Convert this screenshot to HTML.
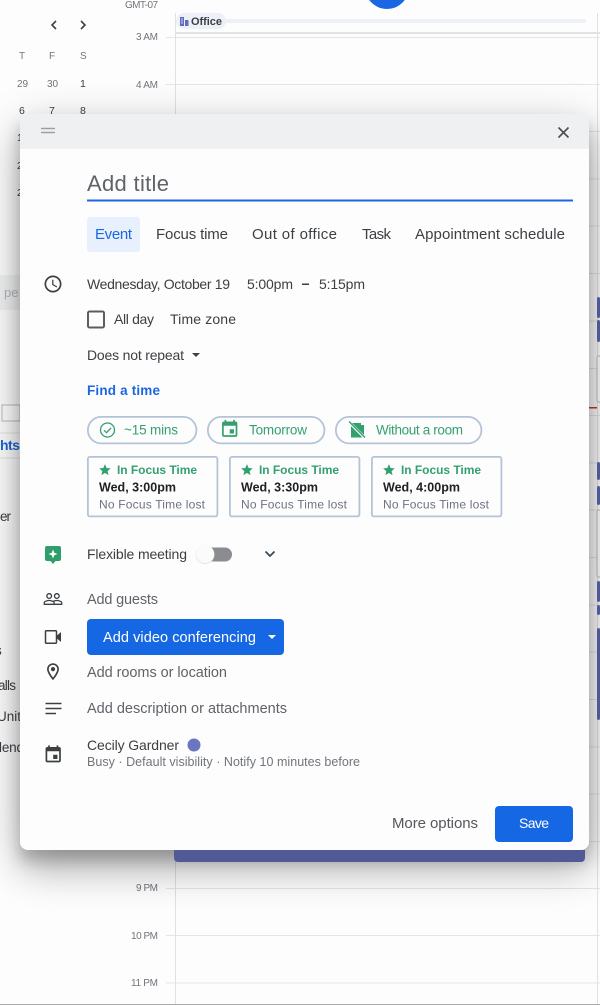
<!DOCTYPE html>
<html><head><meta charset="utf-8">
<style>
html,body{margin:0;padding:0;width:600px;height:1005px;overflow:hidden;background:#fefdfe}
svg{position:absolute;left:0;top:0}
text{font-family:"Liberation Sans",sans-serif;font-size:14.5px;fill:#3c4043}
.g{fill:#70757a;font-size:10px}
.m{fill:#5f6368}
.c{font-size:14px}
.gr{fill:#34a06f;font-size:13.5px}
.st{fill:#34a06f;font-size:12px;font-weight:bold}
.wd{fill:#202124;font-size:12.5px;font-weight:bold}
.nf{fill:#6b7280;font-size:12px}
#d{position:absolute;left:20px;top:114px;width:569px;height:736px;background:#fefdfe;border-radius:8px;box-shadow:0 24px 38px rgba(0,0,0,.17),0 9px 46px rgba(0,0,0,.2),0 11px 15px rgba(0,0,0,.2)}
</style></head><body>
<svg width="600" height="1005" viewBox="0 0 600 1005">
<rect width="600" height="1005" fill="#fefdfe"/>
<circle cx="387" cy="-13" r="22" fill="#1a67e3"/>
<text class="g" x="125" y="8" textLength="33">GMT-07</text>
<path d="M56 21l-4 4 4 4M81 21l4 4-4 4" fill="none" stroke="#3c4043" stroke-width="1.600"/>
<text class="g" x="19" y="59" textLength="6">T</text><text class="g" x="49" y="59" textLength="6">F</text><text class="g" x="80" y="59" textLength="6">S</text>
<text class="g" x="17" y="87" textLength="11">29</text><text class="g" x="47" y="87" textLength="11">30</text>
<text x="80" y="87" style="font-size:10.5px">1</text>
<text x="19" y="114" style="font-size:10.5px">6</text><text x="49" y="114" style="font-size:10.5px">7</text><text x="80" y="114" style="font-size:10.5px">8</text>
<text x="17" y="141" style="font-size:10.5px">1</text><text x="17" y="169" style="font-size:10.5px">2</text><text x="17" y="196" style="font-size:10.5px">2</text>
<rect x="0" y="275" width="20" height="35" fill="#f1f3f4"/>
<text x="4" y="297" style="fill:#b5b8bb;font-size:13px">pe</text>
<rect x="2" y="405" width="18" height="16" fill="#fff" stroke="#b8bbbe"/>
<path d="M0 433h20M0 458h20" stroke="#e3e4e6"/>
<text x="0" y="450" style="fill:#1a67d8;font-size:14px;font-weight:bold" textLength="20">hts</text>
<text x="0" y="521" style="font-size:13.5px" textLength="11">er</text>
<text x="-5" y="655" style="font-size:13.5px">s</text>
<text x="-2" y="690" style="font-size:13.5px" textLength="18">alls</text>
<text x="-3" y="721" style="font-size:13.5px" textLength="24">Unit</text>
<text x="-1" y="752" style="font-size:13.5px" textLength="25">lend</text>

<text class="g" x="136" y="40" textLength="22">3 AM</text>
<text class="g" x="136" y="88" textLength="22">4 AM</text>
<text class="g" x="136" y="891" textLength="22">9 PM</text>
<text class="g" x="131" y="939" textLength="27">10 PM</text>
<text class="g" x="131" y="986" textLength="27">11 PM</text>
<path d="M175 33h425" stroke="#d8d9da" stroke-width="1.400"/>
<path d="M166 37.500h434M166 84.500h434M166 131.500h434M166 179h434M166 226h434M166 273.500h434M166 321h434M166 368.500h434M166 415.500h434M166 463h434M166 510h434M166 557.500h434M166 605h434M166 652h434M166 699.500h434M166 747h434M166 794h434M166 841.500h434M166 888.500h434M166 935.500h434M166 983h434" stroke="#e4e5e7"/>
<path d="M175.500 13v992M597.500 13v992" stroke="#e0e1e3"/>
<path d="M0 1004.500h600" stroke="#a9aaac"/>
<rect x="176" y="13" width="50" height="16" rx="8" fill="#eef0f7"/>
<rect x="220" y="19" width="366" height="4" rx="2" fill="#eef0f7"/>
<path d="M180 17h4v9h-4zM185 20h3.500v6h-3.500z" fill="#5c6bc0"/>
<path d="M181 19h2M181 21h2M181 23h2" stroke="#eef0f7" stroke-width=".8"/>
<text x="191" y="25" style="font-size:11px;font-weight:bold" textLength="31">Office</text>
<rect x="597" y="297" width="3" height="21" rx="2" fill="#5a66ad"/>
<rect x="597" y="320" width="3" height="22" rx="2" fill="#5a66ad"/>
<rect x="597" y="356" width="6" height="46" rx="2" fill="#fff" stroke="#bdbec0"/>
<rect x="589" y="407" width="8" height="1.500" fill="#d93025"/>
<rect x="597" y="462" width="3" height="18" rx="2" fill="#5a66ad"/>
<rect x="597" y="486" width="3" height="19" rx="2" fill="#5a66ad"/>
<rect x="597" y="510" width="6" height="67" rx="2" fill="#fff" stroke="#bdbec0"/>
<rect x="597" y="581" width="3" height="21" rx="2" fill="#5a66ad"/>
<rect x="597" y="605" width="3" height="10" rx="2" fill="#5a66ad"/>
<rect x="597" y="628" width="3" height="92" rx="2" fill="#5a66ad"/>
</svg>
<div id="d"></div>
<svg width="600" height="1005" viewBox="0 0 600 1005">
<path d="M174 850h411v8a4 4 0 0 1-4 4H178a4 4 0 0 1-4-4z" fill="#515a97"/>
<path d="M20 149v-27a8 8 0 0 1 8-8h553a8 8 0 0 1 8 8v27z" fill="#eff0f2"/>
<path d="M41 128.500h14M41 132.500h14" stroke="#9aa0a6" stroke-width="1.500"/>
<path d="M558.500 127.500l10 10M568.500 127.500l-10 10" stroke="#4a4d51" stroke-width="1.600"/>

<text x="87" y="191" style="font-size:22px;fill:#5f6368" textLength="82">Add title</text>
<rect x="87" y="199.500" width="486" height="2" fill="#1a67e3"/>

<rect x="87" y="217" width="53" height="35" rx="3" fill="#e8f0fe"/>
<text x="95" y="239" style="fill:#1a67e3;font-size:15px" textLength="37">Event</text>
<text x="156" y="239" style="font-size:15px" textLength="72">Focus time</text>
<text x="252" y="239" style="font-size:15px" textLength="85">Out of office</text>
<text x="362" y="239" style="font-size:15px" textLength="29">Task</text>
<text x="415" y="239" style="font-size:15px" textLength="150">Appointment schedule</text>

<path transform="translate(42.800 273.800) scale(.85)" fill="#3c4043" d="M11.990 2C6.470 2 2 6.480 2 12s4.470 10 9.990 10C17.520 22 22 17.520 22 12S17.520 2 11.990 2zM12 20c-4.420 0-8-3.580-8-8s3.580-8 8-8 8 3.580 8 8-3.580 8-8 8zm.5-13H11v6l5.250 3.150.75-1.230-4.500-2.670z"/>
<text class="c" x="87" y="289" textLength="143">Wednesday, October 19</text>
<text class="c" x="247" y="289" textLength="46">5:00pm</text>
<rect x="302" y="283.500" width="7" height="1.500" fill="#3c4043"/>
<text class="c" x="319" y="289" textLength="46">5:15pm</text>

<rect x="88" y="311.500" width="16" height="16" rx="1.500" fill="none" stroke="#5a5e63" stroke-width="2"/>
<text class="c" x="114" y="324" textLength="40">All day</text>
<text class="c" x="170" y="324" textLength="66">Time zone</text>
<text class="c" x="87" y="360" textLength="97">Does not repeat</text>
<path d="M192 353h8l-4 4z" fill="#3c4043"/>
<text x="87" y="395" style="fill:#1a67e3;font-weight:bold;font-size:13.5px" textLength="73">Find a time</text>

<g fill="#fefdfe" stroke="#b4c4d6" stroke-width="1.800">
<rect x="87.900" y="416.900" width="108.500" height="26.500" rx="13.200"/>
<rect x="207.900" y="416.900" width="116.500" height="26.500" rx="13.200"/>
<rect x="335.900" y="416.900" width="145.500" height="26.500" rx="13.200"/>
<rect x="87.900" y="456.900" width="129.500" height="59.500" rx="2"/>
<rect x="229.900" y="456.900" width="129.500" height="59.500" rx="2"/>
<rect x="371.900" y="456.900" width="129.500" height="59.500" rx="2"/>
</g>
<circle cx="107.500" cy="430" r="7" fill="none" stroke="#34a06f" stroke-width="1.300"/>
<path d="M104 430.200l2.500 2.500 4.500-4.700" fill="none" stroke="#34a06f" stroke-width="1.300"/>
<text class="gr" x="124" y="434.500" textLength="54">~15 mins</text>
<path transform="translate(219.500 419) scale(.85)" fill="#34a06f" d="M17 12h-5v5h5v-5zM16 1v2H8V1H6v2H5c-1.110 0-1.990.9-1.990 2L3 19c0 1.100.89 2 2 2h14c1.100 0 2-.9 2-2V5c0-1.100-.9-2-2-2h-1V1h-2zm3 18H5V8h14v11z"/>
<text class="gr" x="249" y="434.500" textLength="58">Tomorrow</text>
<path d="M351 423h10v14.500h-10zM361 425h3v12.500h-3z" fill="#34a06f"/>
<path d="M349 422l16 16" stroke="#fefdfe" stroke-width="3"/>
<path d="M349 421.500l16 16" stroke="#34a06f" stroke-width="1.400"/>
<text class="gr" x="376" y="434.500" textLength="87">Without a room</text>

<path transform="translate(98 463) scale(.58)" fill="#34a06f" d="M12 17.270L18.180 21l-1.640-7.030L22 9.240l-7.190-.61L12 2 9.190 8.630 2 9.240l5.460 4.730L5.820 21z"/>
<text class="st" x="117" y="474" textLength="80">In Focus Time</text>
<text class="wd" x="99" y="491.500" textLength="77">Wed, 3:00pm</text>
<text class="nf" x="99" y="508.500" textLength="106">No Focus Time lost</text>
<path transform="translate(240 463) scale(.58)" fill="#34a06f" d="M12 17.270L18.180 21l-1.640-7.030L22 9.240l-7.190-.61L12 2 9.190 8.630 2 9.240l5.460 4.730L5.820 21z"/>
<text class="st" x="259" y="474" textLength="80">In Focus Time</text>
<text class="wd" x="241" y="491.500" textLength="77">Wed, 3:30pm</text>
<text class="nf" x="241" y="508.500" textLength="106">No Focus Time lost</text>
<path transform="translate(382 463) scale(.58)" fill="#34a06f" d="M12 17.270L18.180 21l-1.640-7.030L22 9.240l-7.190-.61L12 2 9.190 8.630 2 9.240l5.460 4.730L5.820 21z"/>
<text class="st" x="401" y="474" textLength="80">In Focus Time</text>
<text class="wd" x="383" y="491.500" textLength="77">Wed, 4:00pm</text>
<text class="nf" x="383" y="508.500" textLength="106">No Focus Time lost</text>

<path d="M47 546h12a2 2 0 0 1 2 2v11a2 2 0 0 1-2 2h-3.500L53 564l-2.500-3H47a2 2 0 0 1-2-2v-11a2 2 0 0 1 2-2z" fill="#2e9e6b"/>
<path d="M53 549.500l1.300 3.200 3.200 1.300-3.200 1.300-1.300 3.200-1.300-3.200-3.200-1.300 3.200-1.300z" fill="#fff"/>
<text class="c" x="87" y="559" textLength="100">Flexible meeting</text>
<rect x="205" y="547.500" width="27" height="14" rx="7" fill="#8a8c8f"/>
<circle cx="205" cy="554.500" r="9.500" fill="#e3e3e5"/>
<circle cx="205" cy="554" r="9" fill="#fbfbfc"/>
<path d="M265.500 551.500l4.500 4.500 4.500-4.500" fill="none" stroke="#3c4a60" stroke-width="1.800"/>

<path transform="translate(42.800 588.800) scale(.85)" fill="#3c4043" d="M16.500 13c-1.200 0-3.070.34-4.500 1-1.430-.67-3.300-1-4.500-1C5.330 13 1 14.080 1 16.250V19h22v-2.750c0-2.170-4.330-3.250-6.500-3.250zm-4 4.500h-10v-1.250c0-.54 2.560-1.750 5-1.750s5 1.210 5 1.750v1.250zm9 0H14v-1.250c0-.46-.2-.86-.52-1.220.88-.3 1.960-.53 3.020-.53 2.440 0 5 1.210 5 1.750v1.250zM7.500 12c1.930 0 3.500-1.570 3.500-3.500S9.430 5 7.500 5 4 6.570 4 8.500 5.570 12 7.500 12zm0-5.500c1.100 0 2 .9 2 2s-.9 2-2 2-2-.9-2-2 .9-2 2-2zm9 5.500c1.930 0 3.500-1.570 3.500-3.500S18.430 5 16.500 5 13 6.570 13 8.500s1.570 3.500 3.500 3.500zm0-5.500c1.100 0 2 .9 2 2s-.9 2-2 2-2-.9-2-2 .9-2 2-2z"/>
<text class="m" x="87" y="604" textLength="71">Add guests</text>

<rect x="87" y="619" width="197" height="36" rx="4" fill="#1667e3"/>
<text x="103" y="642" style="fill:#fff" textLength="153">Add video conferencing</text>
<path d="M268 635h8l-4 4z" fill="#fff"/>
<path d="M46.300 630.800h9.400a.8.8 0 0 1 .8.8v10.800a.8.8 0 0 1-.8.8h-9.400a.8.8 0 0 1-.8-.8v-10.800a.8.8 0 0 1 .8-.8z" fill="none" stroke="#3c4043" stroke-width="1.500"/>
<path d="M57 635.500l4-3.500v10l-4-3.500z" fill="#3c4043"/>

<path transform="translate(42.800 661.500) scale(.85)" fill="#3c4043" fill-rule="evenodd" d="M12 2C8.130 2 5 5.130 5 9c0 5.250 7 13 7 13s7-7.750 7-13c0-3.870-3.130-7-7-7zM7 9c0-2.760 2.240-5 5-5s5 2.240 5 5c0 2.880-2.880 7.190-5 9.880C9.920 16.210 7 11.850 7 9zm5-2.500a2.500 2.500 0 1 0 0 5 2.500 2.500 0 0 0 0-5z"/>
<text class="m" x="87" y="677" textLength="140">Add rooms or location</text>

<path d="M45.500 703.500h16M45.500 708.500h16M45.500 713.500h10.500" stroke="#3c4043" stroke-width="1.500"/>
<text class="m" x="87" y="713" textLength="200">Add description or attachments</text>

<path transform="translate(43 744.500) scale(.85)" fill="#3c4043" d="M17 12h-5v5h5v-5zM16 1v2H8V1H6v2H5c-1.110 0-1.990.9-1.990 2L3 19c0 1.100.89 2 2 2h14c1.100 0 2-.9 2-2V5c0-1.100-.9-2-2-2h-1V1h-2zm3 18H5V8h14v11z"/>
<text class="c" x="87" y="750" textLength="92">Cecily Gardner</text>
<circle cx="194" cy="745" r="6.500" fill="#6b76c1"/>
<text class="m" x="87" y="766" style="font-size:12.500px;fill:#70757a" textLength="273">Busy · Default visibility · Notify 10 minutes before</text>

<text x="392" y="828" style="fill:#54575b;font-size:15px" textLength="86">More options</text>
<rect x="495" y="806" width="78" height="36" rx="4" fill="#1667e3"/>
<text class="c" x="519" y="828" style="fill:#fff" textLength="30">Save</text>
</svg>
</body></html>
